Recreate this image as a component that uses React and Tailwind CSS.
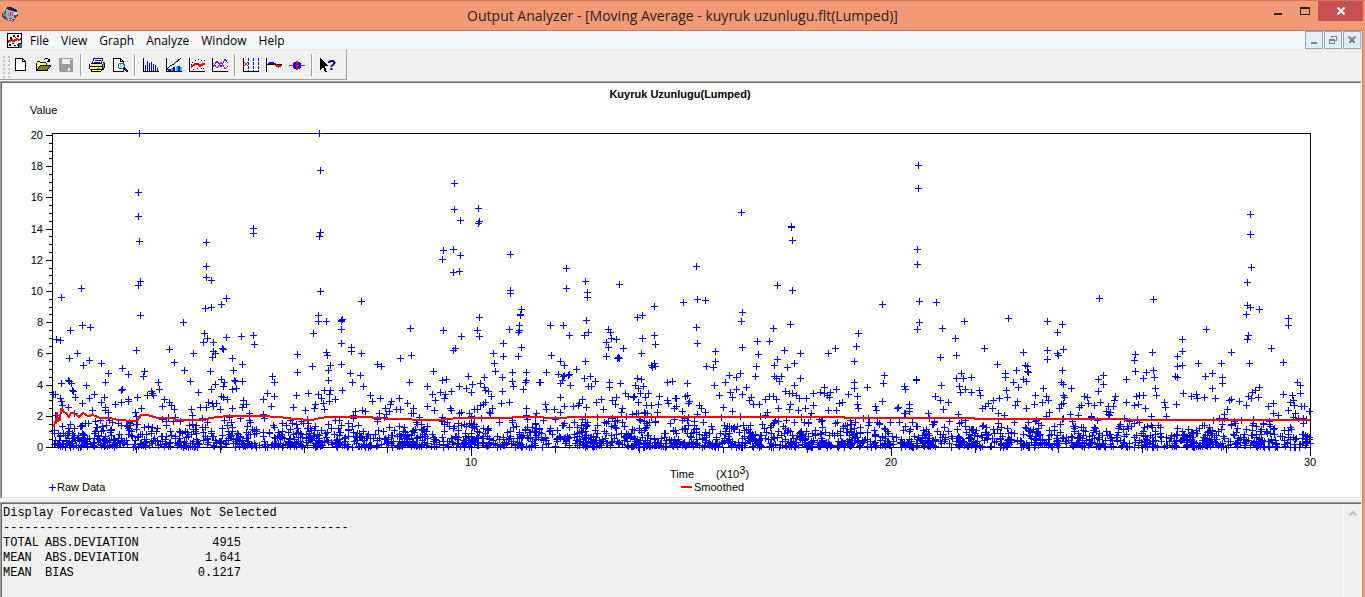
import { useMemo } from "react";

// chart geometry, in viewBox units
const LEFT = 52;
const RIGHT = 1310;
const TOP = 133;
const BASE = 447;
const UNIT = 15.6;

// raw observations of the queue length above 2
const PEAKS = `
61,297 81,288 139,133 138,192 138,216 139,241 140,281 138,285 140,315 206,242 206,266 206,277 211,280 205,308
211,307 221,304 226,298 253,228 253,233 319,133 320,170 320,232 319,236 320,291 318,315 183,322 82,325 90,327
70,330 318,321 326,321 313,333 56,339 60,340 204,333 207,338 203,342 213,342 226,337 241,336 253,335 254,344
136,350 169,349 193,353 77,353 69,358 89,360 83,365 101,363 174,362 213,351 215,353 212,357 223,349 222,348
232,358 242,364 297,354 326,352 327,355 312,366 330,365 122,368 108,373 128,374 144,371 143,376 184,370 210,371
233,370 297,372 328,370 272,376 190,381 61,383 68,380 69,381 71,383 105,382 158,382 86,385 221,379 224,382
215,384 234,380 235,381 242,381 274,382 328,380 122,389 121,390 159,389 198,392 211,389 223,386 232,389 236,388
72,390 73,391 151,391 152,393 147,395 153,395 53,394 55,394 94,394 75,397 89,398 104,397 137,397 60,398
164,399 221,396 223,397 227,399 267,393 274,396 296,395 308,393 263,399 318,394 324,390 330,390 329,394 321,398
335,399 243,400 61,401 82,403 101,402 121,402 128,399 128,401 115,404 62,405 68,407 92,410 105,407 105,410
108,412 141,408 135,412 169,402 171,405 162,406 174,409 191,409 200,407 208,402 212,403 216,403 206,407 213,406
220,409 232,408 243,404 246,404 242,407 249,413 271,406 293,407 305,410 315,404 314,408 323,403 329,401 324,409
342,319 341,320 341,321 341,329 341,343 341,364 479,317 410,328 443,330 461,336 477,330 479,336 520,314 520,315
509,329 519,325 519,330 518,332 550,325 563,325 586,320 569,335 584,335 588,332 608,329 610,332 637,317 642,315
611,338 616,339 606,342 608,347 623,348 642,338 654,335 655,344 641,353 606,356 618,357 619,358 617,358 351,347
351,351 361,353 400,358 411,355 455,348 453,350 377,364 381,366 493,353 503,343 503,356 494,363 495,371 521,347
518,356 551,355 560,361 564,365 585,361 576,369 654,363 651,365 655,366 652,367 350,373 360,375 352,382 363,386
433,371 409,382 442,380 446,379 468,376 427,386 459,386 466,388 472,384 480,383 484,377 484,387 488,391 502,377
512,372 512,381 513,386 523,389 526,372 526,380 525,382 539,382 540,382 546,372 558,374 563,376 568,375 569,374
564,375 562,380 560,383 570,385 584,378 590,376 595,381 588,386 591,386 609,382 609,387 620,383 637,378 641,379
635,385 638,388 643,386 667,382 672,381 342,390 370,395 372,401 380,398 399,398 391,401 390,404 407,403 385,408
396,409 400,409 389,411 355,411 362,410 379,413 413,408 427,406 432,394 435,400 440,392 445,394 444,398 451,391
450,408 451,410 434,410 471,392 485,390 491,396 502,391 501,403 509,402 485,402 480,405 483,404 477,409 474,409
492,408 526,408 545,404 546,409 554,409 560,397 564,406 573,406 582,399 579,403 578,405 586,407 596,402 601,399
603,409 612,400 616,397 615,404 622,408 625,393 628,396 633,397 634,396 640,393 648,393 645,397 638,402 646,405
651,405 659,396 658,404 667,400 668,403 675,398 674,408 454,183 454,209 478,208 460,220 479,221 478,223 443,250
453,249 442,259 460,255 453,272 459,271 510,254 510,290 510,293 566,268 566,288 585,281 587,292 587,297 619,284
654,306 361,301 521,309 742,312 741,321 696,327 697,343 773,328 790,324 757,341 769,341 742,347 758,354 784,350
777,359 774,365 794,363 800,353 787,367 715,351 715,361 706,366 713,367 756,366 828,353 835,348 858,333 856,346
854,361 919,322 917,329 942,328 964,321 955,338 956,355 940,357 984,348 997,364 1008,318 729,375 740,373 736,377
725,382 714,385 755,376 746,387 736,389 730,392 742,394 719,395 732,397 687,383 774,376 781,376 776,378 779,381
800,378 794,385 785,391 789,393 792,393 796,395 799,398 806,398 813,393 820,392 824,387 824,393 830,392 836,389
829,397 827,395 854,382 854,388 848,394 857,396 867,387 857,404 858,408 842,402 839,403 836,410 884,375 883,383
882,401 875,406 876,410 898,407 897,408 904,386 905,389 916,379 916,380 909,404 909,408 909,411 941,385 935,396
940,400 948,402 943,409 956,378 961,373 963,378 971,377 959,386 960,392 965,389 971,392 979,390 980,395 1005,373
1005,377 1006,390 1007,397 999,398 993,400 988,403 985,406 992,408 982,408 749,400 751,397 753,404 759,404 765,399
769,396 773,396 776,399 778,408 790,404 789,409 798,410 805,408 813,405 828,410 723,407 732,411 676,398 687,395
685,396 689,401 688,403 676,406 699,405 701,408 682,411 741,212 791,226 791,227 792,240 696,266 777,285 792,290
683,302 697,299 705,300 918,165 918,188 917,249 917,264 882,304 919,301 936,302 1250,214 1250,234 1251,267
1247,282 1099,298 1153,299 1247,305 1250,307 1259,309 1246,314 1288,318 1288,325 1047,321 1062,324 1057,332
1047,350 1047,359 1057,353 1058,355 1063,349 1023,352 1062,370 1025,365 1027,366 1027,371 1028,372 1016,370
1023,379 1026,381 1013,382 1018,387 1017,401 1015,405 1026,408 1034,404 1035,395 1043,388 1046,396 1048,400
1042,402 1061,382 1063,384 1071,388 1063,395 1064,397 1061,404 1063,403 1059,408 1049,412 1206,329 1182,339
1182,351 1177,356 1182,365 1177,366 1177,377 1175,376 1135,354 1134,360 1135,371 1152,352 1146,372 1153,370
1154,377 1143,378 1155,388 1156,395 1103,375 1098,379 1103,384 1098,391 1126,379 1198,363 1221,363 1231,352
1212,373 1205,376 1222,377 1222,383 1212,388 1248,335 1247,339 1249,363 1271,348 1283,362 1297,382 1300,385
1300,393 1283,394 1292,395 1259,387 1255,390 1252,392 1248,396 1251,398 1258,397 1246,405 1239,401 1231,399
1229,400 1215,398 1204,397 1196,394 1197,398 1191,396 1183,393 1176,404 1164,402 1165,407 1136,396 1139,395
1143,395 1126,402 1134,405 1138,404 1145,408 1115,396 1114,400 1108,406 1113,406 1106,411 1100,402 1094,405
1084,396 1087,397 1088,403 1081,405 1079,407 1227,409 1268,406 1273,403 1290,402 1293,400 1294,405 1301,406
1304,406 1288,410 1309,411`;

const SMOOTHED = `54,427 55,421 56,424 57,412 58,421 60,420 61,409 62,409 64,412 66,413 69,417 71,413 74,413 79,417 83,413
88,416 93,415 100,418 110,418 118,420 133,421 137,421 141,415 147,415 158,418 172,418 177,420 190,420 204,420
210,418 227,416 260,416 280,417 293,419 312,420 320,418 328,417 372,417 373,418 395,419 428,420 442,420 445,419
462,418 510,418 514,417 543,417 544,418 566,418 568,417 844,417 845,418 974,418 975,419 1120,419 1128,420 1310,420`;

const MENUS = ["File", "View", "Graph", "Analyze", "Window", "Help"];

const STATS = [
  ["TOTAL", "ABS.DEVIATION", "4915"],
  ["MEAN", "ABS.DEVIATION", "1.641"],
  ["MEAN", "BIAS", "0.1217"],
];

function plus(x, y) {
  return `M${x - 3} ${y}h7v1h-7zM${x} ${y - 3}h1v7h-1z`;
}

// the dense band of short queues near the time axis
function lowValues(count) {
  let seed = 90210;
  const next = () => {
    seed = (seed * 1664525 + 1013904223) % 4294967296;
    return seed / 4294967296;
  };
  const out = [];
  while (out.length < count) {
    const x = LEFT + 1 + Math.floor(next() * (RIGHT - LEFT));
    const value = -Math.log(1 - next()) * 0.75;
    const keep = next() < 0.8 + 0.2 * Math.sin(x / 9);
    if (value < 2.3 && keep) out.push([x, Math.round(BASE - value * UNIT)]);
  }
  return out;
}

function Icon({ children, size = 16 }) {
  return (
    <svg
      width={size}
      height={size}
      viewBox="0 0 16 16"
      fill="none"
      shapeRendering="crispEdges"
      aria-hidden="true"
      className="overflow-visible"
    >
      {children}
    </svg>
  );
}

const AXES = "M.5 1v14M0 14.5h16";

const TOOLS = [
  [
    {
      label: "New",
      art: (
        <path d="M3.5 1.5h7l3 3v9h-10zM10.5 1.5v3h3" fill="#fff" stroke="#000" />
      ),
    },
    {
      label: "Open",
      art: (
        <>
          <path d="M1 6h1v-1h3v1h6v3h-5l-5 5z" fill="#ffff66" />
          <path d="M2 13l3-5h11l-4 5z" fill="#808000" />
          <path
            d="M1.5 14V5.5M2 4.5h3M5 5.5h6M11.5 6v3M5 8.5h11M1 13.5h11M4.5 9v1M3.5 10v2M2.5 12v2M15.5 9v1M14.5 10v1M13.5 11v1M12.5 12v2M9 2.5h1M10 1.5h3M13 2.5h1M14.5 2v3M12 4.5h3M13.5 3v2"
            stroke="#000"
          />
        </>
      ),
    },
    {
      label: "Save",
      disabled: true,
      art: (
        <>
          <path d="M1 1h14v14h-13l-1-1z" fill="#9d9d9d" />
          <path d="M4 2h8v5h-8zM10 11h2v3h-2z" fill="#f0f0f0" />
          <path d="M13 2h1v1h-1z" fill="#f0f0f0" />
        </>
      ),
    },
  ],
  [
    {
      label: "Print",
      art: (
        <>
          <path d="M5 1h9l-2 6h-9z" fill="#fff" stroke="#000080" />
          <path d="M6 3.5h6M5 5.5h6" stroke="#000080" />
          <path d="M1 7h12v5h-12z" fill="#ffff66" />
          <path d="M13 7l3-2v5l-3 3z" fill="#a0a040" />
          <path d="M3 12h9v2h-9z" fill="#fff" />
          <path
            d="M2 6.5h11M.5 7v5M1 9.5h12M1 12.5h12M2 14.5h10M13.5 7v6M14 5.5h1M15.5 6v5M14.5 11v2M12.5 13v1M2.5 13v1"
            stroke="#000"
          />
          <path d="M8 11h3v1h-3z" fill="#c08000" />
        </>
      ),
    },
    {
      label: "Print Preview",
      art: (
        <>
          <path d="M1.5 1.5h7l3 3v10h-10zM8.5 1.5v3h3" fill="#fff" stroke="#000" />
          <path d="M7.5 6.5h3l2 1v3l-2 1h-3l-1-1v-3z" fill="#b8ffff" stroke="#3f5a70" />
          <path d="M8 7h1v1h-1zM8 9h1v1h-1z" fill="#00d0d8" />
          <path d="M12 11l4 4" stroke="#000060" strokeWidth="2" />
        </>
      ),
    },
  ],
  [
    {
      label: "Histogram",
      art: (
        <>
          <path d={AXES} stroke="#000" />
          <path
            d="M2.5 14V8M4.5 14V4M6.5 14V6M8.5 14V5M10.5 14V7M12.5 14V8M14.5 14V11"
            stroke="#0000e0"
          />
        </>
      ),
    },
    {
      label: "Cumulative",
      art: (
        <>
          <path d="M2 12h3v2h-3zM7 10h2v4h-2zM12 9h2v5h-2z" fill="#0000e0" />
          <path d="M5 11h2v3h-2zM10 9h2v5h-2zM14 10h2v4h-2z" fill="#00c8ff" />
          <path d={AXES} stroke="#000" />
          <path d="M1 12.5L4 9l4-2 7-6" stroke="#000" />
        </>
      ),
    },
    {
      label: "Moving Average",
      art: (
        <>
          <path d={AXES} stroke="#000" />
          <path d="M2 10l4-3 3 0 2 2 3-2 2 0" stroke="#f00000" strokeWidth="2" />
          <path
            d="M3 5h1v1h-1zM6 3h1v1h-1zM9 2h1v1h-1zM12 3h1v1h-1zM4 12h1v1h-1zM8 11h1v1h-1zM12 11h1v1h-1zM14 11h1v1h-1zM2 7h1v1h-1zM15 3h1v1h-1z"
            fill="#000"
          />
        </>
      ),
    },
    {
      label: "Compare",
      art: (
        <>
          <path d={AXES} stroke="#000" />
          <path d="M1 6l4 5 4-6 4 7 3-3" stroke="#e000e0" />
          <path d="M1 10l4-6 4 6 4-8 3 4" stroke="#3030e0" />
        </>
      ),
    },
  ],
  [
    {
      label: "Batch",
      art: (
        <>
          <path d={AXES} stroke="#000" />
          <path d="M5.5 1v13M10.5 1v13M15.5 1v13" stroke="#0000e0" strokeDasharray="3 1" />
          <path d="M1 5l4 4M5 5l-4 4" stroke="#f00000" />
        </>
      ),
    },
    {
      label: "Correlogram",
      art: (
        <>
          <path d="M.5 1v14M0 7.5h16" stroke="#000" />
          <path d="M2 7v-1h1v-1h5v1h2v1z" fill="#0000e0" />
          <path d="M9 8h7v1h-1v1h-2v1h-1v-1h-2v-1h-1z" fill="#f00000" />
        </>
      ),
    },
    {
      label: "Confidence Interval",
      art: (
        <>
          <path d="M0 8h16v1h-16z" fill="#f00000" />
          <path d="M4 6h1v-1h6v1h1v5h-1v1h-6v-1h-1z" fill="#0000ff" />
          <path d="M7 4h2v9h-2z" fill="#f00000" />
        </>
      ),
    },
  ],
];

function ToolButton({ label, disabled, children }) {
  return (
    <button
      type="button"
      aria-label={label}
      disabled={disabled}
      className="flex h-6 w-[23px] items-center justify-center"
    >
      <Icon>{children}</Icon>
    </button>
  );
}

function TitleBar() {
  return (
    <header className="flex h-[29px] shrink-0 items-start">
      <div className="w-[135px] pt-1 pl-[2px]">
        <svg width="17" height="20" viewBox="0 0 17 20" shapeRendering="crispEdges" aria-hidden="true">
          <path d="M4 3h4l7 3v3l1 1-5 7-8-3-3-2V8l3-1z" fill="#404858" />
          <path d="M4 4l9 3-1 7-9-2z" fill="#a8acb8" />
          <path d="M5 2h4l6 3v2l-4-1-6-2z" fill="#101878" />
          <path d="M12 7h3v3h-3zM10 13h3v1h-3z" fill="#d8dcf4" />
          <path d="M1 8h3v4l-3-1z" fill="#70887c" />
          <path d="M6 8h1v3h-1zM10 8h1v3h-1z" fill="#e06060" />
          <path d="M8 7h1v4h-1z" fill="#f01010" />
          <path d="M5 13l6 2-1 1-5-2z" fill="#c0c0c8" />
        </svg>
      </div>
      <h1 className="flex-1 pt-1 text-center font-['Open_Sans',sans-serif] text-[14px] leading-[22px] text-[#2b211d]">
        Output Analyzer - [Moving Average - kuyruk uzunlugu.flt(Lumped)]
      </h1>
      <div className="flex w-[135px] justify-end pr-[2px]">
        <button type="button" aria-label="Minimize" className="flex h-5 w-[27px] items-center justify-center pt-[6px]">
          <span className="h-[2px] w-2 bg-[#2b211d]" />
        </button>
        <button type="button" aria-label="Maximize" className="flex h-5 w-[27px] items-center justify-center">
          <span className="h-2 w-[10px] border border-t-2 border-[#2b211d]" />
        </button>
        <button type="button" aria-label="Close" className="flex h-5 w-[45px] items-center justify-center bg-[#c75050]">
          <svg width="8" height="8" viewBox="0 0 8 8" aria-hidden="true">
            <path d="M.5.5l7 7M7.5.5l-7 7" stroke="#fff" strokeWidth="2" />
          </svg>
        </button>
      </div>
    </header>
  );
}

function ChildButton({ label, children }) {
  return (
    <button
      type="button"
      aria-label={label}
      className="flex h-[18px] w-[18px] items-center justify-center border border-[#98a6b4] bg-[#e1edf9]"
    >
      <svg width="10" height="10" viewBox="0 0 10 10" fill="none" stroke="#76848f" shapeRendering="crispEdges" aria-hidden="true">
        {children}
      </svg>
    </button>
  );
}

function MenuBar() {
  return (
    <nav className="flex h-[19px] shrink-0 items-center border-b border-[#e8e8e8] bg-[#f5f6f7] pl-[7px]">
      <Icon>
        <path d="M0 1h15v15h-15z" fill="#fff" />
        <path d="M10 12l5-2v6h-4z" fill="#008080" />
        <path d="M0 1.5h15M.5 1v15M14.5 1v10M0 15.5h11M11.5 12v4M12 11.5h3" stroke="#000" />
        <path d="M1 10l3-2 3 1 3-2 2 1 2-1" stroke="#f00000" strokeWidth="2" />
        <path d="M3 5h2v2h-2zM6 3h2v2h-2zM10 3h2v2h-2zM2 12h2v2h-2zM5 11h2v1h-2zM7 13h2v1h-2zM8 5h1v1h-1z" fill="#000" />
      </Icon>
      <div className="ml-px flex">
        {MENUS.map((name) => (
          <button
            key={name}
            type="button"
            className="px-[6px] pt-[2px] font-['Open_Sans',sans-serif] text-[12px] leading-4 text-black"
          >
            {name}
          </button>
        ))}
      </div>
      <div className="ml-auto flex gap-px self-end pr-px">
        <ChildButton label="Minimize document">
          <path d="M2 8h6" strokeWidth="2" />
        </ChildButton>
        <ChildButton label="Restore document">
          <path d="M3 1.5h6M8.5 1v5M3.5 1v2M7 5.5h2M1 4.5h6M1.5 4v5M6.5 4v5M1 8.5h6M1 5.5h6" />
        </ChildButton>
        <ChildButton label="Close document">
          <path d="M2 2l6 6M8 2l-6 6" strokeWidth="2" />
        </ChildButton>
      </div>
    </nav>
  );
}

function Toolbar() {
  return (
    <div className="flex h-[31px] shrink-0 items-start">
      <div className="flex h-[30px] items-center border-r border-b border-[#a0a0a0] pr-[7px]">
        <div className="flex h-[26px] w-2 gap-[3px] pt-1 pl-[3px]">
          <span className="w-[2px] shrink-0 bg-[repeating-linear-gradient(#c4c4c4_0_2px,transparent_2px_4px)]" />
          <span className="w-[2px] shrink-0 bg-[repeating-linear-gradient(#c4c4c4_0_2px,transparent_2px_4px)]" />
        </div>
        {TOOLS.map((group) => (
          <div key={group[0].label} className="flex items-center">
            {group.map((tool) => (
              <ToolButton key={tool.label} label={tool.label} disabled={tool.disabled}>
                {tool.art}
              </ToolButton>
            ))}
            <span className="mx-[3px] h-[22px] w-[2px] border-r border-l border-r-white border-l-[#a0a0a0]" />
          </div>
        ))}
        <ToolButton label="Context Help">
          <path d="M0 1v12l3-3 2 5h2l-2-6h3z" fill="#000" />
          <text
            x="7"
            y="13"
            fill="#000080"
            fontSize="15"
            fontWeight="bold"
            className="font-['Liberation_Sans',sans-serif]"
          >
            ?
          </text>
        </ToolButton>
      </div>
    </div>
  );
}

function Chart() {
  const crosses = useMemo(() => {
    const peaks = PEAKS.trim().split(/\s+/).map((p) => p.split(",").map(Number));
    return [...peaks, ...lowValues(2300)].map(([x, y]) => plus(x, y)).join("");
  }, []);

  const yTicks = [];
  for (let i = 0; i <= 40; i++) {
    const y = Math.round(BASE - (i * UNIT) / 2);
    const major = i % 4 === 0;
    yTicks.push(`M${major ? 46 : 49} ${y}h${major ? 6 : 3}v1h${major ? -6 : -3}z`);
  }
  const xTicks = [];
  for (let i = 1; i <= 15; i++) {
    const x = Math.round(LEFT + (i * (RIGHT - LEFT)) / 15);
    xTicks.push(`M${x} ${BASE}h1v${i % 5 === 0 ? 9 : 6}h-1z`);
  }

  return (
    <svg
      viewBox="2 83 1358 414"
      role="img"
      aria-label="Kuyruk Uzunlugu(Lumped)"
      className="block w-full bg-white font-['Liberation_Sans',Arial,sans-serif] text-[11px]"
    >
      <g shapeRendering="crispEdges">
        <path
          d={`M${LEFT} ${TOP}H${RIGHT + 1}V${BASE + 1}H${LEFT}zM${LEFT + 1} ${TOP + 1}V${BASE}H${RIGHT}V${TOP + 1}z`}
          fillRule="evenodd"
        />
        <path d={yTicks.join("")} />
        <path d={xTicks.join("")} />
        <path d={crosses + plus(52, 487)} fill="#0000ff" />
        <path d="M681 486h11v2h-11z" fill="#ff0000" />
        <polyline points={SMOOTHED} fill="none" stroke="#ff0000" strokeWidth="2" />
      </g>
      <text x="680" y="98" textAnchor="middle" fontWeight="bold">
        Kuyruk Uzunlugu(Lumped)
      </text>
      <text x="30" y="114">Value</text>
      {[0, 2, 4, 6, 8, 10, 12, 14, 16, 18, 20].map((v) => (
        <text key={v} x="43" y={Math.round(BASE - v * UNIT) + 4} textAnchor="end">
          {v}
        </text>
      ))}
      {[10, 20, 30].map((v) => (
        <text key={v} x={Math.round(LEFT + (v * (RIGHT - LEFT)) / 30)} y="466" textAnchor="middle">
          {v}
        </text>
      ))}
      <text x="670" y="478">Time</text>
      <text x="716" y="478">
        (X10<tspan dy="-4">3</tspan>
        <tspan dy="4">)</tspan>
      </text>
      <text x="57" y="491">Raw Data</text>
      <text x="694" y="491">Smoothed</text>
    </svg>
  );
}

function Results() {
  return (
    <section className="flex flex-1 border-t border-r border-l border-[#a0a0a0] border-r-white">
      <div className="flex flex-1 border-t border-l border-[#696969]">
        <div className="flex-1 pt-[2px] pl-px font-['Liberation_Mono','Courier_New',monospace] text-[12px] leading-[15px] text-black">
          <p>Display Forecasted Values Not Selected</p>
          <p>{"-".repeat(48)}</p>
          <table className="border-collapse">
            <tbody>
              {STATS.map(([kind, name, value]) => (
                <tr key={kind + name}>
                  <td className="w-[42px] p-0">{kind}</td>
                  <td className="w-[98px] p-0">{name}</td>
                  <td className="w-[98px] p-0 text-right">{value}</td>
                </tr>
              ))}
            </tbody>
          </table>
        </div>
        <div className="flex w-[18px] justify-center border-l border-white pt-[6px]">
          <svg width="8" height="7" viewBox="0 0 8 7" aria-hidden="true">
            <path d="M.5 5.5L4 2l3.5 3.5" fill="none" stroke="#bcbcbc" strokeWidth="2" />
          </svg>
        </div>
      </div>
    </section>
  );
}

export default function App() {
  return (
    <div className="flex min-h-screen flex-col border-t border-[#c57d5e] bg-[#f29a75]">
      <TitleBar />
      <div className="mr-[2px] flex flex-1 flex-col border-t border-r border-[#c57d5e] bg-[#f0f0f0]">
        <MenuBar />
        <Toolbar />
        <main className="flex flex-1 flex-col gap-[3px]">
          <section className="border-t border-r border-b border-l border-t-[#a0a0a0] border-r-white border-b-white border-l-[#a0a0a0]">
            <div className="border-t border-r border-b border-l border-t-[#696969] border-r-[#e3e3e3] border-b-[#e3e3e3] border-l-[#696969]">
              <Chart />
            </div>
          </section>
          <Results />
        </main>
      </div>
    </div>
  );
}
